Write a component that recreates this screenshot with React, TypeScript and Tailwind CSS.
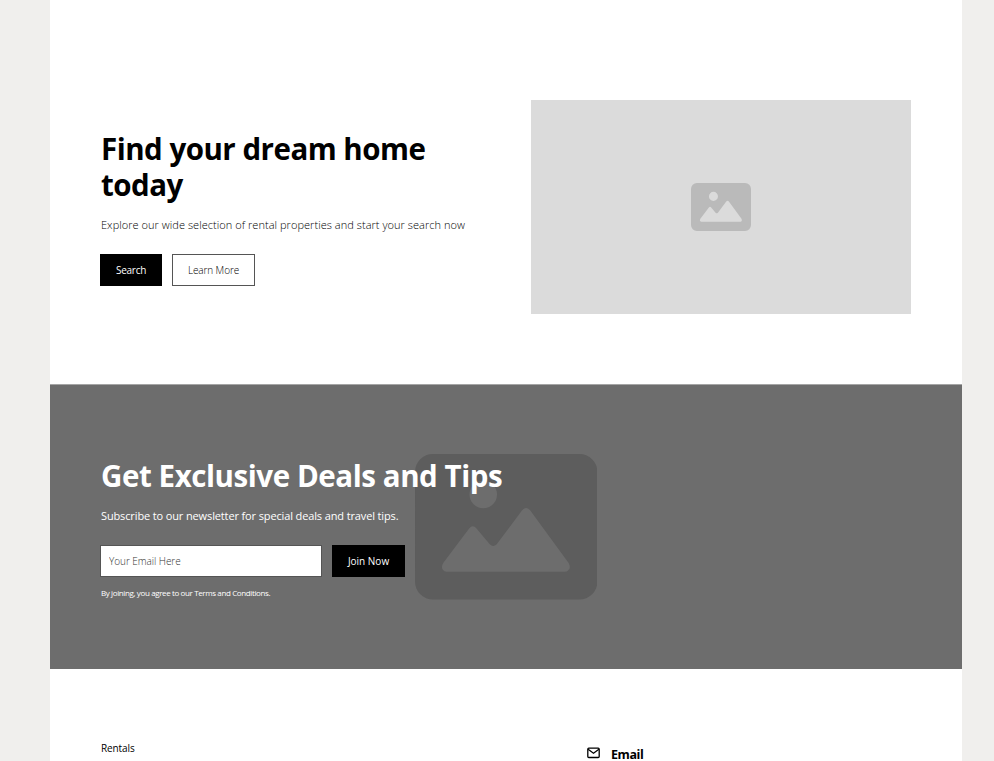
type IconProps = { className: string };

function PictureIcon({ className }: IconProps) {
  return (
    <svg viewBox="0 0 183 146" className={className} fill="currentColor" aria-hidden="true">
      <path
        fillRule="evenodd"
        d="M18 0H165A18 18 0 0 1 183 18V128A18 18 0 0 1 165 146H18A18 18 0 0 1 0 128V18A18 18 0 0 1 18 0ZM68.5 26.8A13.8 13.8 0 1 0 68.5 54.400A13.8 13.8 0 1 0 68.500 26.8ZM28.500 109L54.500 74.500Q58 70.500 61.500 74.500L75 90.500Q78.500 94 82 90.500L107.500 56.500Q111.500 52 115.500 56.500L154 109Q157 114.500 153.500 117Q152.500 118.200 150 118.200H32Q29 118.200 27.800 116Q26 113 28.500 109Z"
      />
    </svg>
  );
}

function MailIcon({ className }: IconProps) {
  return (
    <svg viewBox="0 0 14 12" className={className} fill="none" stroke="currentColor" strokeWidth="1.3" aria-hidden="true">
      <rect x="0.800" y="1.200" width="11.400" height="9.300" rx="1" />
      <path d="M1.100 2.200L6.500 6.200L11.900 2.200" />
    </svg>
  );
}

export default function App() {
  return (
    <div className="h-[761px] overflow-hidden bg-[#f0efed] pr-8 pl-[50px] font-['Open_Sans',sans-serif] text-black">
      <main className="h-full bg-white">
        <section className="flex h-[384px] justify-between pr-[51px] pl-[51px] pt-[100px]">
          <div className="w-[380px] pt-[31px]">
            <h1 className="w-[350px] text-[29.5px] leading-9 font-bold tracking-[-0.5px]">
              Find your dream home today
            </h1>
            <p className="mt-[14px] text-[11px] leading-4 tracking-[0.045px] font-light whitespace-nowrap">
              Explore our wide selection of rental properties and start your search now
            </p>
            <div className="mt-[21px] -ml-px flex gap-[10px]">
              <button className="h-8 w-[62px] bg-black text-[10px] tracking-[-0.25px] text-white">Search</button>
              <button className="h-8 w-[83px] border border-[#555] text-[10px] font-light tracking-[-0.1px]">Learn More</button>
            </div>
          </div>
          <div className="flex h-[214px] w-[380px] items-center justify-center bg-[#dbdbdb]">
            <PictureIcon className="h-12 w-[60px] text-[#bababa]" />
          </div>
        </section>

        <section className="relative h-[285px] border-t border-[#a5a5a5] bg-[#6d6d6d] pl-[51px] text-white">
          <PictureIcon className="absolute top-[69px] left-[365px] h-[145.500px] w-[182.400px] text-[#5d5d5d]" />
          <div className="relative pt-[73px]">
            <h2 className="text-[29.5px] leading-9 font-bold tracking-[-0.43px] whitespace-nowrap">Get Exclusive Deals and Tips</h2>
            <p className="mt-[14px] text-[11px] leading-4 tracking-[-0.13px]">Subscribe to our newsletter for special deals and travel tips.</p>
            <form className="mt-[21px] -ml-px flex gap-[10px]">
              <input
                placeholder="Your Email Here"
                className="h-8 w-[222px] border border-[#555] bg-white px-2 text-[10px] font-light tracking-[-0.05px] text-black outline-none placeholder:text-[#333]"
              />
              <button type="button" className="h-8 w-[73px] bg-black text-[10px]">Join Now</button>
            </form>
            <p className="mt-[10px] text-[8px] leading-3 tracking-[-0.38px]">By joining, you agree to our Terms and Conditions.</p>
          </div>
        </section>

        <footer className="flex pt-[71px] pl-[51px]">
          <a className="w-[486px] text-[10px] leading-4 tracking-[-0.1px]">Rentals</a>
          <div className="flex gap-[10px] pt-[6px]">
            <MailIcon className="mt-[1px] h-3 w-[14px]" />
            <h3 className="pt-px text-[12.5px] leading-4 font-bold tracking-[-0.4px]">Email</h3>
          </div>
        </footer>
      </main>
    </div>
  );
}
